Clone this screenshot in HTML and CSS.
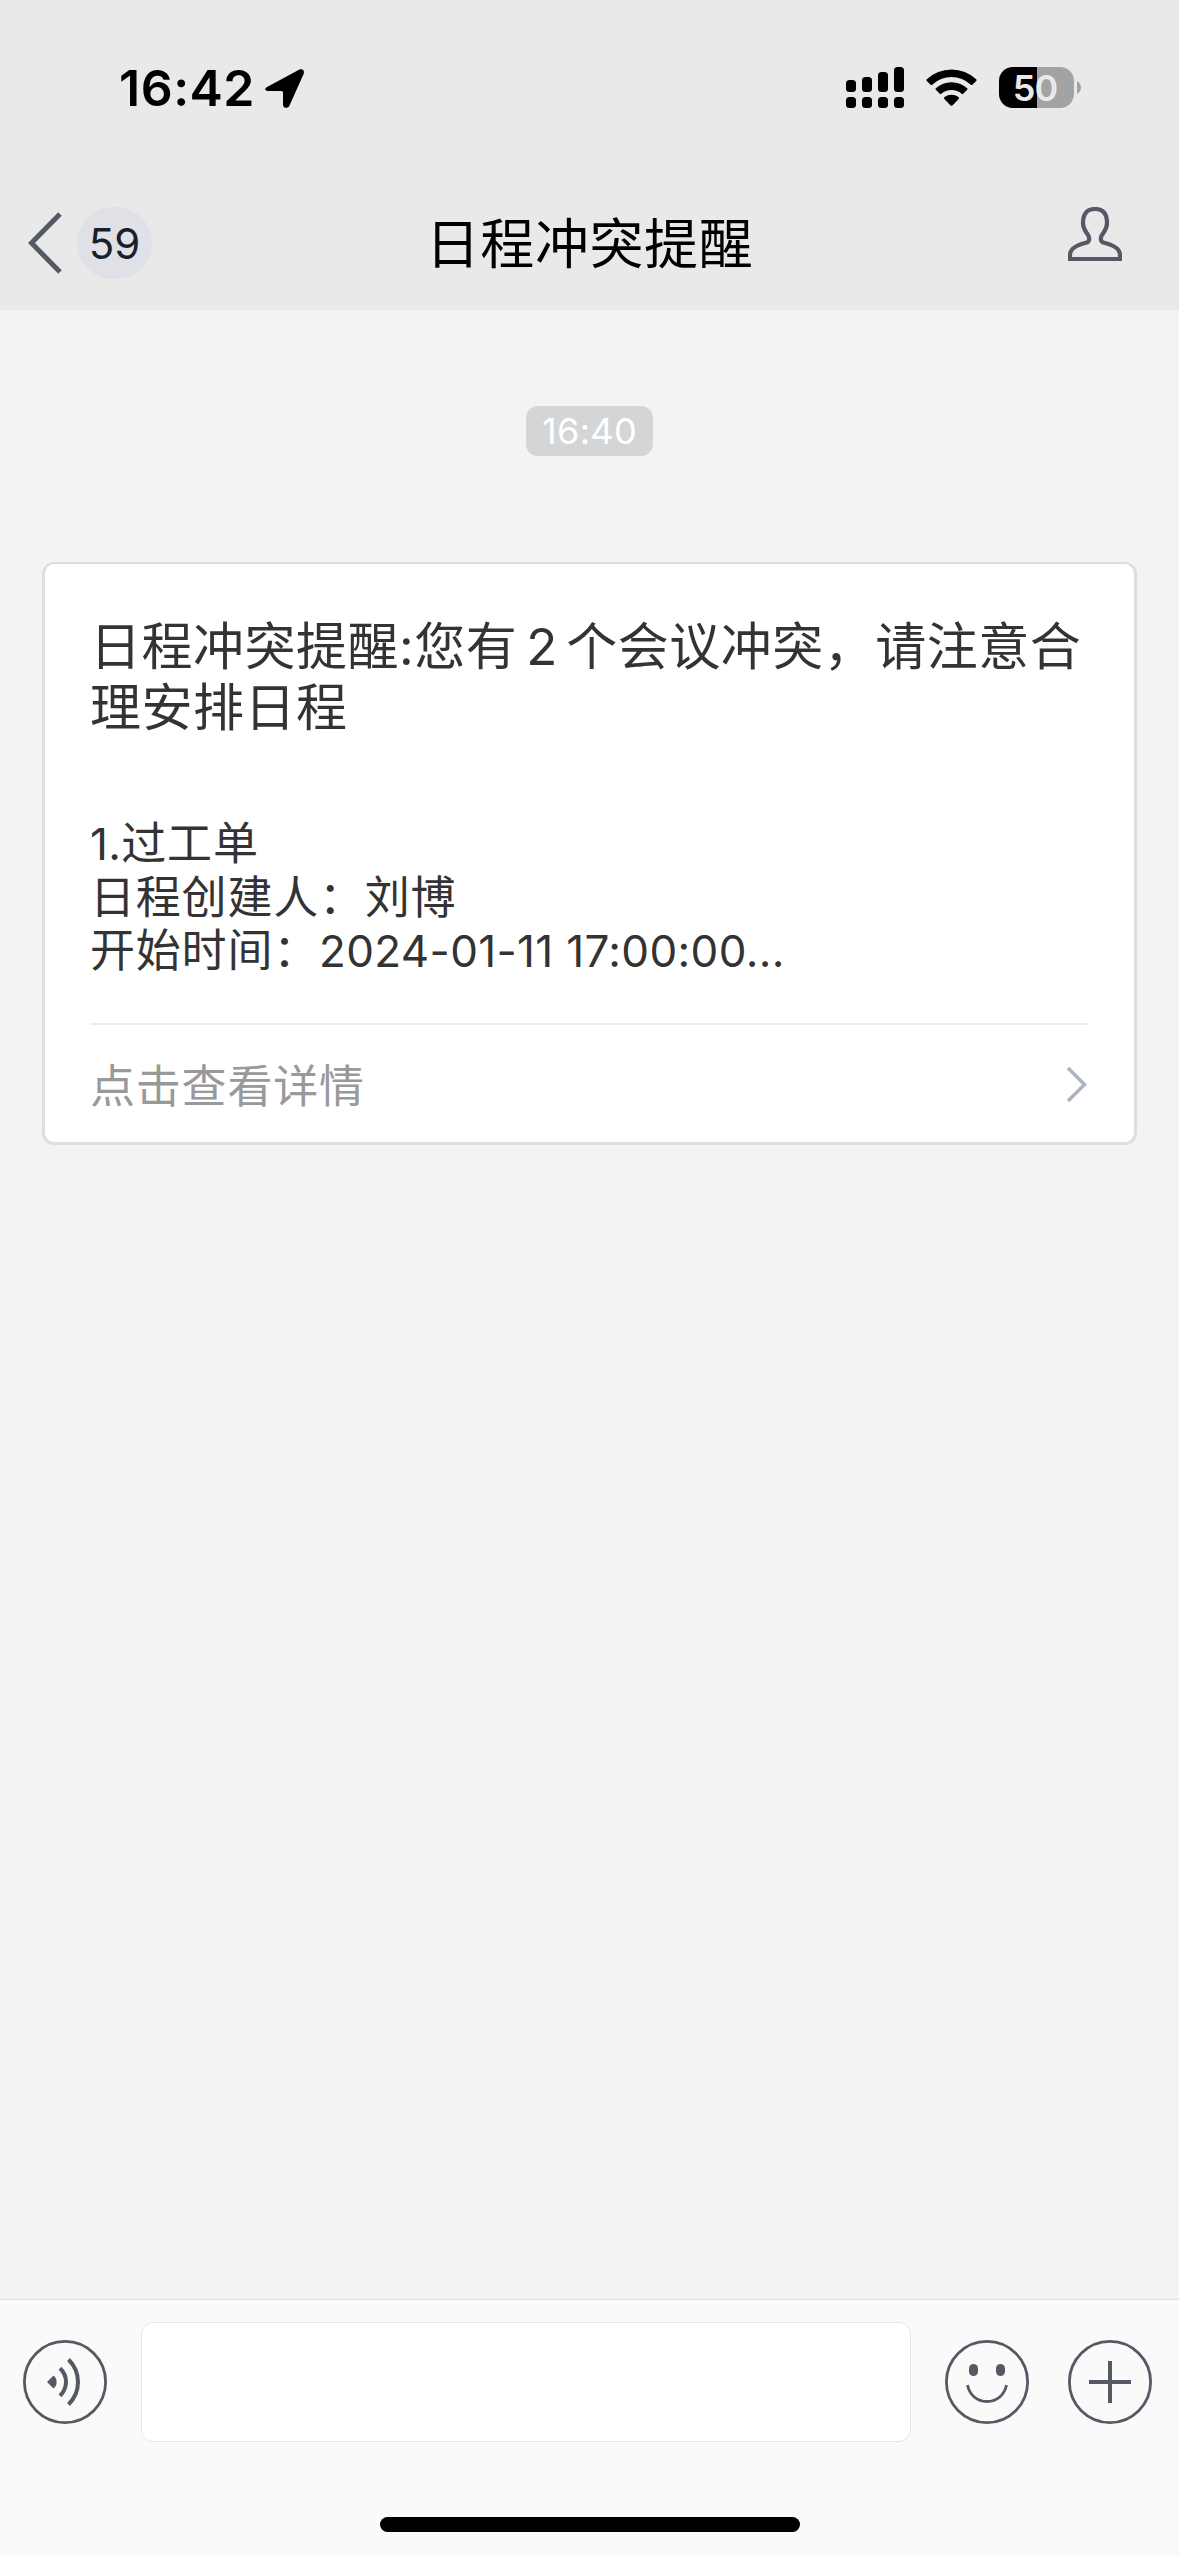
FILE: index.html
```html
<!DOCTYPE html>
<html lang="zh-CN">
<head>
<meta charset="utf-8">
<title>日程冲突提醒</title>
<link rel="stylesheet" href="styles.css">
</head>
<body>
<div class="screen">
  <header class="header">
    <div class="status">
      <div class="status-left">
        <span class="clock">16:42</span>
        <svg class="location" width="40" height="40" viewBox="0 0 40 40"><path d="M3 17.500 34 .8c3.500-1.500 6 .9 4.500 4.500L24.500 36.500c-1.500 3.500-6.500 3-6.500-1V23.500q0-1.500-1.500-1.500H4C-.5 22-1 19.300 3 17.500Z"/></svg>
      </div>
      <div class="status-right">
        <svg class="signal" width="58" height="41" viewBox="0 0 58 41">
          <rect x="0" y="13" width="10" height="12" rx="3.500"/><rect x="16" y="10" width="10" height="15" rx="3.500"/><rect x="32" y="5" width="10" height="20" rx="3.500"/><rect x="48" y="0" width="10" height="25" rx="3.500"/>
          <rect x="0" y="30" width="10" height="11" rx="3.500"/><rect x="16" y="30" width="10" height="11" rx="3.500"/><rect x="32" y="30" width="10" height="11" rx="3.500"/><rect x="48" y="30" width="10" height="11" rx="3.500"/>
        </svg>
        <svg class="wifi" width="52" height="38" viewBox="0 0 52 38">
          <path d="M.8 10.200a36 36 0 0 1 49.400 0q.8.900 0 1.700l-3.800 3.800q-.8.700-1.600 0a28 28 0 0 0-38.600 0q-.8.700-1.600 0L.8 11.900q-.8-.8 0-1.700Z"/>
          <path d="M9.800 19.200a23.500 23.500 0 0 1 31.400 0q.8.800 0 1.600l-4 4q-.8.700-1.600 0a15.500 15.500 0 0 0-20.200 0q-.8.700-1.600 0l-4-4q-.8-.8 0-1.600Z"/>
          <path d="M18.500 28.100a11.500 11.500 0 0 1 14 0q1 .9.200 1.800l-6.300 6.500q-.9.800-1.800 0l-6.300-6.500q-.8-.9.200-1.800Z"/>
        </svg>
        <div class="battery"><span>50</span></div>
        <svg class="nub" width="5" height="14" viewBox="0 0 5 14"><path d="M0 0C5.300 3 5.300 10 0 13Z"/></svg>
      </div>
    </div>
    <nav class="nav">
      <div class="nav-left">
        <svg width="35" height="62" viewBox="0 0 35 62"><path d="M32 2 3.500 31 32 60"/></svg>
        <span class="unread">59</span>
      </div>
      <h1 class="title">日程冲突提醒</h1>
      <svg class="person" width="54" height="54" viewBox="0 0 54 54"><path d="M2 52V48C2 41 11 37.500 18 35.800C21.500 35 22 31 20 28C17.500 24 15 22 15 16C15 7 19 2 27 2S39 7 39 16C39 22 36.500 24 34 28C32 31 32.500 35 36 35.800C43 37.500 52 41 52 48V52Z"/></svg>
    </nav>
  </header>
  <main class="chat">
    <time class="stamp">16:40</time>
    <article class="card">
      <h2 class="card-title">日程冲突提醒<span class="colon">:</span>您有<span class="count">2</span>个会议冲突，请注意合<br>理安排日程</h2>
      <div class="card-body">
        <p><span class="latin">1.</span>过工单</p>
        <p>日程创建人：刘博</p>
        <p>开始时间：<span class="latin">2024-01-11 17:00:00...</span></p>
      </div>
      <footer class="card-foot">
        <span>点击查看详情</span>
        <svg width="22" height="38" viewBox="0 0 22 38"><path d="M1 2 17.500 18.500 1 35"/></svg>
      </footer>
    </article>
  </main>
  <section class="composer">
    <div class="tools">
      <svg class="tool" width="84" height="84" viewBox="0 0 84 84">
        <circle cx="42" cy="42" r="40.600"/>
        <path class="solid" d="M24 42 30.500 35.500Q34 38.500 33.500 42 34 45.500 30.500 48.500Z"/>
        <path class="wave" d="M37 28.300Q43 34 43 42T37 55.700M45.500 19.500Q55 29 55 42T45.500 64.500"/>
      </svg>
      <div class="input"></div>
      <svg class="tool smile" width="84" height="84" viewBox="0 0 84 84">
        <circle cx="42" cy="42" r="40.600"/>
        <rect class="solid" x="24" y="24" width="9" height="12" rx="4.500"/><rect class="solid" x="51" y="24" width="9" height="12" rx="4.500"/>
        <path d="M22.500 45C24.500 55 32 61.500 42 61.500S59.500 55 61.500 45"/>
      </svg>
      <svg class="tool" width="84" height="84" viewBox="0 0 84 84">
        <circle cx="42" cy="42" r="40.600"/>
        <path class="plus" d="M42 21V63M21 42H63"/>
      </svg>
    </div>
    <div class="home"></div>
  </section>
</div>
</body>
</html>
```
FILE: styles.css
```css
* { box-sizing: border-box; }

body {
  margin: 0;
  background: #f1f3f5;
  font-family: "Noto Sans CJK SC", sans-serif;
}

h1, h2, p { margin: 0; font-weight: 400; }

svg { display: block; flex: none; }

.screen {
  width: 1179px;
  height: 2556px;
  display: flex;
  flex-direction: column;
  overflow: hidden;
}

.header {
  height: 310px;
  background: #e9e9e9;
}

.status {
  height: 176px;
  display: flex;
  justify-content: space-between;
  padding: 67px 97px 0 119px;
}

.status-left, .status-right { display: flex; align-items: flex-start; }

.clock {
  width: 146px;
  font: 600 50px/42px Inter, sans-serif;
  letter-spacing: 0.500px;
}

.location { margin-top: 2px; }
.wifi { margin: 2px 21px 0 22px; }

.battery {
  width: 75px;
  height: 41px;
  padding-right: 3px;
  border-radius: 14px;
  background: linear-gradient(90deg, #000 38px, #a3a3a3 38px);
  color: #e9e9e9;
  font: 600 36px/42px Inter, sans-serif;
  text-align: center;
  letter-spacing: -1px;
}

.nub { margin: 14px 0 0 3px; fill: #a3a3a3; }

.nav {
  height: 134px;
  display: grid;
  grid-template-columns: 1fr auto 1fr;
  align-items: center;
  padding: 0 57px 0 28px;
}

.nav-left { display: flex; align-items: center; gap: 14px; }
.nav-left path { fill: none; stroke: #545964; stroke-width: 5; }

.unread {
  width: 75px;
  height: 72px;
  border-radius: 36px;
  background: #dfe1e7;
  color: #1a202b;
  font: 400 42px/73px Inter, sans-serif;
  text-align: center;
}

.title {
  padding-left: 29px;
  padding-bottom: 4px;
  font-size: 54px;
  line-height: 72px;
  letter-spacing: 0.600px;
  color: #000;
}

.person { justify-self: end; margin-bottom: 18px; }
.person path { fill: none; stroke: #545964; stroke-width: 4.200; }

.chat {
  flex: 1;
  display: flex;
  flex-direction: column;
  align-items: center;
  padding: 96px 42px 0;
}

.stamp {
  width: 127px;
  height: 50px;
  border-radius: 12px;
  background: #d4d5d7;
  color: #fff;
  font: 400 36px/51px Inter, sans-serif;
  letter-spacing: 0.300px;
  text-align: center;
}

.card {
  width: 1095px;
  height: 583px;
  margin-top: 106px;
  padding: 49px 45px 0;
  border: 3px solid #dedede;
  border-top-width: 2px;
  border-radius: 12px;
  background: #fff;
  color: #333;
  white-space: nowrap;
}

.card-title {
  font-size: 51px;
  line-height: 61px;
  letter-spacing: 0.500px;
}

.colon, .count, .latin { font-family: Inter, sans-serif; line-height: 1; }
.count { margin: 0 8.500px 0 9px; }

.card-body {
  margin-top: 79px;
  font-size: 45px;
  line-height: 53.500px;
  letter-spacing: 0.800px;
}

.latin { font-size: 44px; letter-spacing: 0.350px; }

.card-foot {
  height: 122px;
  margin-top: 48.500px;
  padding: 0 0 4px;
  border-top: 2px solid #ededed;
  display: flex;
  align-items: center;
  justify-content: space-between;
  font-size: 45px;
  letter-spacing: 0.800px;
  color: #999;
}

.card-foot svg { margin-top: 4px; }
.card-foot path { fill: none; stroke: #adb3c0; stroke-width: 3.500; }

.composer {
  height: 257px;
  border-top: 1px solid #dcdfe5;
  background: #fafafa;
}

.tools {
  display: flex;
  align-items: center;
  padding: 22px 27px 0 23px;
}

.input {
  width: 770px;
  height: 120px;
  margin: 0 34px;
  border: 1px solid #e6e6e6;
  border-radius: 12px;
  background: #fff;
}

.tool { fill: none; stroke: #545964; stroke-width: 2.800; }
.tool .solid { fill: #545964; stroke: none; }
.tool .wave, .tool .plus { stroke-width: 4; }
.smile { margin-right: 39px; }

.home {
  width: 420px;
  height: 15px;
  margin: 75px auto 0;
  border-radius: 8px;
  background: #000;
}
```
